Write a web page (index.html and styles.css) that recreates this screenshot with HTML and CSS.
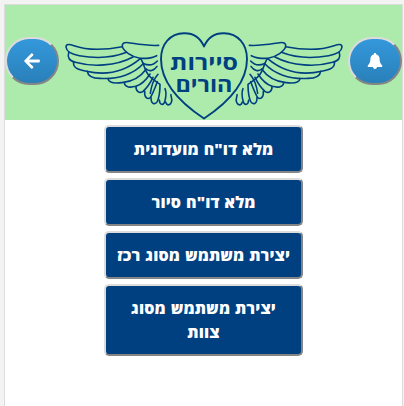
FILE: index.html
```
<!DOCTYPE html>
<html lang="he" dir="rtl">
<head>
<meta charset="utf-8">
<title>סיירות הורים</title>
<link rel="stylesheet" href="styles.css">
</head>
<body>
<div class="app">
  <header class="header">
    <button class="round" aria-label="התראות">
      <svg width="16" height="18" viewBox="0 0 16 18"><path fill="#fff" d="M8 1C8.800 1 9.100 1.500 9.100 2.200C11.500 2.800 12.500 4.500 12.600 7C12.700 10 13.200 11.300 15 13.200C15.800 14.200 15.200 15 14.300 15H10C9.900 16.200 9.100 17 8 17S6.100 16.200 6 15H1.700C.8 15 .2 14.200 1 13.200C2.800 11.300 3.300 10 3.400 7C3.500 4.500 4.500 2.800 6.900 2.200C6.900 1.500 7.200 1 8 1Z"/></svg>
    </button>
    <svg class="logo" width="288" height="90" viewBox="60 32 288 90">
      <defs>
        <g id="wing" transform="translate(60 25) scale(.33333)">
          <path d="M296 61C262 63 232 57 205 53C192 51 185 56 187 64C190 78 215 96 240 100C258 101 276 99 290 92"/>
          <path d="M187 65C145 73 85 77 42 62C28 57 18 56 18 66C19 79 36 88 58 92C107 101 159 98 200 82"/>
          <path d="M26 83C22 98 27 107 46 112C95 126 167 124 219 96"/>
          <path d="M41 111C38 128 53 134 79 139C132 151 190 144 241 101"/>
          <path d="M82 139C84 154 98 160 120 160C176 164 223 146 251 115"/>
          <path d="M144 161C146 173 163 176 186 173C218 170 241 157 259 132"/>
          <path d="M193 174C195 188 212 188 228 184C246 178 257 167 270 147"/>
          <path d="M228 184C227 199 238 207 249 199C259 190 270 176 279 157"/>
          <path d="M254 198C252 218 263 224 271 218C279 204 286 186 292 170"/>
          <path d="M273 218C273 238 285 240 292 230C299 214 300 192 300 178C286 168 269 158 262 145C253 133 251 112 242 101"/>
          <path d="M292 108C282 119 270 124 251 116M291 124C282 137 269 141 258 132M294 148C283 160 274 184 271 205"/>
          <path d="M298 225C299 241 311 242 314 230C319 214 319 201 315 191"/>
          <path d="M317 231C321 244 332 241 335 229C337 221 332 214 333 209"/>
        </g>
      </defs>
      <g class="ink wing-ink">
        <use href="#wing"/>
        <use href="#wing" transform="translate(408 0) scale(-1 1)"/>
      </g>
      <path class="ink" d="M204 46.500C200 37 193 33 184 33.200C170 33.500 161 44 161 59C161 83 179 102 204 118.500C229 102 247 83 247 59C247 44 238 33.500 224 33.200C215 33 208 37 204 46.500Z"/>
      <text class="name" x="204" y="69.500" textLength="68" lengthAdjust="spacingAndGlyphs">סיירות</text>
      <text class="name" x="204" y="91.500" textLength="57" lengthAdjust="spacingAndGlyphs">הורים</text>
    </svg>
    <button class="round" aria-label="חזרה">
      <svg width="16" height="18" viewBox="0 0 448 512"><path fill="#fff" d="M257.500 445.100l-22.200 22.200c-9.400 9.400-24.600 9.400-33.900 0L7 273c-9.400-9.400-9.400-24.600 0-33.900L201.400 44.700c9.400-9.400 24.600-9.400 33.900 0l22.200 22.200c9.500 9.500 9.300 25-.4 34.300L136.600 216H424c13.300 0 24 10.700 24 24v32c0 13.300-10.700 24-24 24H136.600l120.500 114.800c9.800 9.300 10 24.800.4 34.300z"/></svg>
    </button>
  </header>
  <main class="actions">
    <button class="action">מלא דו"ח מועדונית</button>
    <button class="action">מלא דו"ח סיור</button>
    <button class="action">יצירת משתמש מסוג רכז</button>
    <button class="action">יצירת משתמש מסוג צוות</button>
  </main>
</div>
</body>
</html>
```
FILE: styles.css
```
* { box-sizing: border-box; }
html, body { height: 100%; overflow: hidden; }
body {
  margin: 0;
  padding: 4px 1px 0 4px;
  background: #f3f3f3;
  font-family: "Open Sans", "Noto Sans", sans-serif;
}
.app {
  height: 403px;
  border: 1px solid #dcdcdc;
  background: #fff;
}
.header {
  display: flex;
  align-items: center;
  justify-content: space-between;
  height: 115px;
  background: #adebad;
}
.round {
  display: flex;
  align-items: center;
  justify-content: center;
  flex: none;
  width: 54px;
  height: 48px;
  margin-top: -3px;
  padding: 0;
  border: 2px solid;
  border-color: #dcdcdc #858585 #858585 #dcdcdc;
  border-radius: 25px;
  background: linear-gradient(#3498db, #2980b9);
}
.logo { flex: none; margin: 28px 0 0 1px; }
.ink {
  fill: none;
  stroke: #004080;
  stroke-width: 1.9;
  stroke-linejoin: round;
  stroke-linecap: round;
}
.wing-ink { stroke-width: 4.8; }
.name {
  fill: #004080;
  font-size: 20.5px;
  font-weight: 700;
  text-anchor: middle;
}
.actions {
  display: flex;
  flex-direction: column;
  align-items: center;
  gap: 5px;
  padding-top: 5px;
}
.action {
  width: 50%;
  min-height: 48px;
  padding: 10px 8px;
  border: 2px solid;
  border-color: #dcdcdc #858585 #858585 #dcdcdc;
  border-radius: 5px;
  background: #004080;
  color: #fff;
  font: 800 16px/24px "Open Sans", "Noto Sans", sans-serif;
  letter-spacing: 0.15px;
  word-spacing: 0.5px;
}
```
